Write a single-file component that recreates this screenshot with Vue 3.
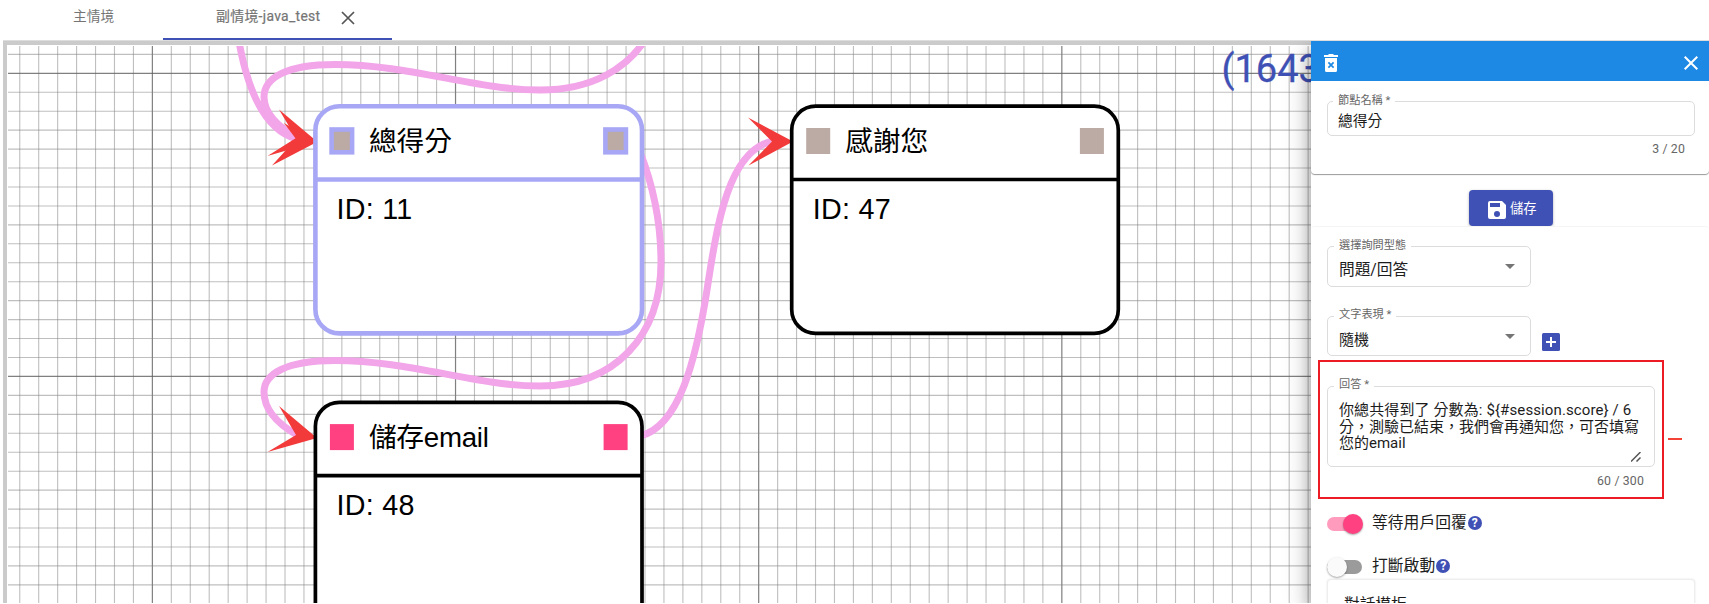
<script setup>
const tabs = [
  { title: '主情境', active: false },
  { title: '副情境-java_test', active: true },
]

const step = 18.947
const columns = Array.from({ length: 70 }, (_, i) => ({ at: 19.75 + i * step, major: i % 16 === 7 }))
const rows = Array.from({ length: 30 }, (_, i) => ({ at: 54.35 + i * step, major: i % 16 === 1 }))

const nodes = [
  { id: 11, name: '總得分', x: 315.4, y: 106.2, port: '#bcaaa4', selected: true, titleWidth: 83 },
  { id: 47, name: '感謝您', x: 791.7, y: 106.2, port: '#bcaaa4', selected: false, titleWidth: 83 },
  { id: 48, name: '儲存email', x: 315.4, y: 402.3, port: '#ff4081', selected: false, titleWidth: 120 },
]

const links = [
  'M238 36 C246 84 262 130 297 139',
  'M651 30 C630 70 590 90 540 90 C475 90 410 64.500 335 64.500 C286 64.500 264 78 264 97 C264 113 278 127 297 137',
  'M640 152 C654 188 661 226 661 262 C661 336 615 386 540 386 C475 386 410 360.500 335 360.500 C286 360.500 264 374 264 392 C264 410 278 424 297 435',
  'M640 436 C679 427 696 360 707 290 C717 225 728 150 773 141',
]

const arrows = [
  '279,109.500 317,141.500 267.500,156 296,138',
  '284,123 317,142 272,165.500 296,139',
  '279,406 317,438 267.500,452 296,435',
  '748,117.500 793,141.500 748.500,165.500 772,141.500',
]
</script>

<template>
  <div class="page">
    <nav class="tabs">
      <div v-for="tab in tabs" :key="tab.title" class="tab" :class="{ active: tab.active }">
        <span>{{ tab.title }}</span>
        <svg v-if="tab.active" class="tab-close" viewBox="0 0 14 14"><path d="M1 1l12 12M13 1L1 13" /></svg>
      </div>
    </nav>

    <main class="workspace">
      <svg class="canvas" width="1701" height="557" viewBox="8 46 1701 557">
        <g class="grid">
          <line v-for="c in columns" :key="'c' + c.at" :x1="c.at" :x2="c.at" y1="46" y2="603" :class="{ major: c.major }" />
          <line v-for="r in rows" :key="'r' + r.at" x1="8" x2="1709" :y1="r.at" :y2="r.at" :class="{ major: r.major }" />
        </g>
        <path v-for="d in links" :key="d" :d="d" class="link" />
        <polygon v-for="p in arrows" :key="p" :points="p" class="arrow" />
        <g v-for="n in nodes" :key="n.id" :transform="`translate(${n.x} ${n.y})`" class="node" :class="{ selected: n.selected }">
          <rect class="body" width="326.600" height="227.200" rx="24" />
          <line x1="0" x2="326.600" y1="73.300" y2="73.300" class="body" />
          <rect class="port" x="14.500" y="21.800" width="24" height="26" :fill="n.port" />
          <rect class="port" x="288.200" y="21.800" width="24" height="26" :fill="n.port" />
          <text x="53.500" y="44.500" :textLength="n.titleWidth">{{ n.name }}</text>
          <text x="21" y="112.800" class="node-id">ID: {{ n.id }}</text>
        </g>
        <text x="1221.500" y="82" class="coords">(1643</text>
      </svg>
    </main>

    <aside class="panel">
      <header class="panel-head">
        <svg width="14" height="18" viewBox="0 0 14 18">
          <path fill="#fff" d="M4.500 0h5v1H14v2H0V1h4.500zM1 4h12v12.500a1.500 1.500 0 0 1-1.500 1.500h-9A1.500 1.500 0 0 1 1 16.500z" />
          <path fill="none" stroke="#1e88e5" stroke-width="1.700" d="M4.400 8.300l5.200 5.400M9.600 8.300l-5.200 5.400" />
        </svg>
        <svg width="14" height="14" viewBox="0 0 14 14"><path fill="none" stroke="#fff" stroke-width="2" d="M.7.700l12.600 12.600M13.300.700L.7 13.300" /></svg>
      </header>

      <section class="name-card">
        <div class="field name-field">
          <label>節點名稱 *</label>
          <span>總得分</span>
        </div>
        <div class="counter">3 / 20</div>
      </section>

      <div class="save-row">
        <button class="save">
          <svg width="18" height="18" viewBox="0 0 18 18">
            <path fill="#fff" fill-rule="evenodd" d="M2 0h12l4 4v12a2 2 0 0 1-2 2H2a2 2 0 0 1-2-2V2a2 2 0 0 1 2-2zM2 2v4h10V2zM9 10a3 3 0 1 0 0 6a3 3 0 0 0 0-6z" />
          </svg>
          <span>儲存</span>
        </button>
      </div>

      <section class="settings">
        <div class="field select type-field">
          <label>選擇詢問型態</label>
          <span>問題/回答</span>
          <i class="caret"></i>
        </div>
        <div class="select-row">
          <div class="field select mode-field">
            <label>文字表現 *</label>
            <span>隨機</span>
            <i class="caret"></i>
          </div>
          <svg class="add" width="18" height="18" viewBox="0 0 18 18">
            <rect width="18" height="18" rx="1.500" fill="#3f51b5" />
            <path d="M9 4v10M4 9h10" stroke="#fff" stroke-width="2" />
          </svg>
        </div>
        <div class="answer-row">
          <div class="answer-box">
            <div class="field answer-field">
              <label>回答 *</label>
              <p><span class="l1">你總共得到了 分數為: ${#session.score} / 6</span><br />分，測驗已結束，我們會再通知您，可否填寫<br />您的email</p>
              <svg class="grip" width="10" height="10" viewBox="0 0 10 10"><path d="M0 9.500L9.500 0M5.500 9.500L9.500 5.500" stroke="#555" stroke-width="1.500" /></svg>
            </div>
            <div class="counter">60 / 300</div>
          </div>
          <i class="remove"></i>
        </div>

        <div class="toggle on">
          <span class="track"><i class="thumb"></i></span>
          <span>等待用戶回覆</span>
          <b class="help">?</b>
        </div>
        <div class="toggle">
          <span class="track"><i class="thumb"></i></span>
          <span>打斷啟動</span>
          <b class="help">?</b>
        </div>
        <div class="template-card">對話模板</div>
      </section>
    </aside>
  </div>
</template>

<style>
body { overflow: hidden; background: #fff; }
</style>

<style scoped>
* { box-sizing: border-box; }
.page {
  position: relative;
  width: 1709px;
  height: 604px;
  overflow: hidden;
  background: #fff;
  font-family: Roboto, "Noto Sans CJK TC", sans-serif;
}
.tabs { display: flex; height: 40px; }
.tab {
  display: flex;
  gap: 21px;
  width: 163px;
  height: 40px;
  padding: 6px 0 0 73px;
  font-size: 13.700px;
  line-height: 20px;
  white-space: nowrap;
  color: #757575;
}
.tab.active {
  width: 229px;
  padding-left: 53px;
  border-bottom: 2px solid #3f51b5;
  font-size: 13.900px;
  letter-spacing: .31px;
}
.tab.active span { width: 104px; -webkit-text-stroke: .2px #757575; }
.tab-close { width: 14px; height: 14px; margin-top: 5px; fill: none; stroke: #555; stroke-width: 1.700; }
.workspace {
  margin-left: 3px;
  height: 563px;
  border-top: 1px solid #ddd;
  background: #fff;
  box-shadow: inset 4px 4px 0 #cbcbcb;
  padding: 5px 0 0 5px;
}
.canvas { display: block; }
.grid line { stroke: #808080; stroke-opacity: .5; stroke-width: 1.100; }
.grid line.major { stroke: #606060; stroke-opacity: .8; stroke-width: 1.200; }
.link { fill: none; stroke: #f2a5e8; stroke-width: 7; }
.arrow { fill: #f23a3a; }
.node text { font: 27.700px "Liberation Sans", "Noto Sans CJK TC", sans-serif; fill: #000; }
.node .node-id { font-size: 28.700px; letter-spacing: .3px; }
.body { fill: #fff; stroke: #000; stroke-width: 3.700; }
.selected .body { stroke: #a7a7f5; stroke-width: 4.600; }
.selected .port { stroke: #a7a7f5; stroke-width: 4.600; x: 16.200px; y: 23.300px; width: 20.500px; height: 22.800px; }
.selected .port:nth-of-type(3) { x: 290px; }
.coords { font: 38px Roboto, sans-serif; fill: #3f51b5; stroke: #3f51b5; stroke-width: .3px; }

.panel {
  position: absolute;
  top: 41px;
  right: 0;
  width: 398px;
  height: 562px;
  overflow: visible;
  background: #fff;
  box-shadow: -2px 8px 14px rgba(0, 0, 0, .28), -5px 14px 26px rgba(0, 0, 0, .12);
  clip-path: inset(0 0 0 -50px);
  color: #1c1c1c;
}
.panel-head {
  display: flex;
  align-items: center;
  justify-content: space-between;
  height: 40px;
  padding: 3px 11px 0 13px;
  background: #1e88e5;
}
.name-card {
  height: 93px;
  padding: 20px 14px 0 16px;
  border-radius: 0 0 4px 4px;
  box-shadow: 0 1px 1px rgba(0, 0, 0, .4);
}
.field {
  position: relative;
  border: 1px solid #dcdcdc;
  border-radius: 5px;
  white-space: nowrap;
}
.field label {
  position: absolute;
  top: -9px;
  left: 5px;
  padding: 0 5px;
  background: #fff;
  font-size: 11.200px;
  line-height: 16px;
  color: #666;
}
.name-field { height: 35px; margin-bottom: 1px; padding: 8px 10px; font-size: 14.700px; line-height: 22px; }
.counter { font-size: 12.300px; letter-spacing: .15px; color: #666; text-align: right; line-height: 16px; padding: 4px 10px 0 0; }
.save-row { display: flex; justify-content: center; height: 52px; padding: 16px 0 0 2px; }
.save {
  display: flex;
  align-items: center;
  gap: 4px;
  width: 84px;
  height: 36px;
  padding: 0 0 0 19px;
  border: 0;
  border-radius: 4px;
  background: #3f51b5;
  color: #fff;
  font: 13.300px Roboto, "Noto Sans CJK TC", sans-serif;
  box-shadow: 0 1px 3px rgba(0, 0, 0, .3);
}
.save svg { margin-top: 4px; }
.save span { margin-top: -2px; }
.settings {
  position: relative;
  height: 377px;
  padding: 19px 14px 0 16px;
  border-top: 1px solid #f5f5f5;
  border-radius: 4px;
  overflow: hidden;
  background: #fff;
}
.select { display: flex; justify-content: space-between; width: 204px; padding: 0 15px 0 11px; font-size: 15.700px; }
.select label, .answer-field label { left: 6px; padding: 0 5px; }
.type-field { height: 41px; line-height: 45px; }
.type-field label { font-size: 11.200px; top: -9px; }
.mode-field { height: 40px; line-height: 46px; font-size: 15px; }
.mode-field label { top: -10px; }
.caret { width: 0; height: 0; margin-top: 17px; border: 5px solid transparent; border-top-color: #757575; border-bottom: 0; }
.select-row { display: flex; gap: 11px; margin-top: 29px; }
.add { margin-top: 17px; }
.answer-row { display: flex; align-items: center; gap: 4px; margin: 4px 0 0 -9px; height: 139px; }
.answer-box { flex: none; width: 346px; height: 139px; padding: 24px 7px 0; border: 2px solid #ed1c24; }
.answer-field { height: 81px; }
.answer-field label { top: -10px; }
.answer-field p { margin: 15px 0 0 11px; font-size: 15px; line-height: 16.500px; }
.l1 { letter-spacing: .11px; }
.grip { position: absolute; right: 13px; bottom: 4px; }
.answer-box .counter { padding: 6px 11px 0 0; }
.remove { width: 14px; height: 2px; margin-top: 19px; background: #f44336; }
.toggle { display: flex; align-items: center; height: 20px; margin-top: 14px; font-size: 15.800px; line-height: 20px; }
.toggle + .toggle { margin-top: 23px; }
.track { position: relative; width: 35px; height: 14px; margin: 1px 10px 0 0; border-radius: 7px; background: #9b9b9b; }
.thumb {
  position: absolute;
  left: 0;
  top: -3px;
  width: 20px;
  height: 20px;
  border-radius: 50%;
  background: #fafafa;
  box-shadow: 0 1px 2px rgba(0, 0, 0, .35);
}
.on .track { background: #ff9cbd; }
.on .thumb { left: 16px; background: #ff4081; }
.help {
  width: 14px;
  height: 14px;
  margin-left: 1px;
  border-radius: 50%;
  background: #3f51b5;
  color: #fff;
  font-size: 12px;
  line-height: 14px;
  text-align: center;
}
.template-card {
  height: 60px;
  margin-top: 3px;
  padding: 14px 16px;
  border: 1px solid #eee;
  border-radius: 4px;
  box-shadow: 0 0 2px rgba(0, 0, 0, .12);
  background: #fff;
  font-size: 15.700px;
  line-height: 22px;
}
</style>
